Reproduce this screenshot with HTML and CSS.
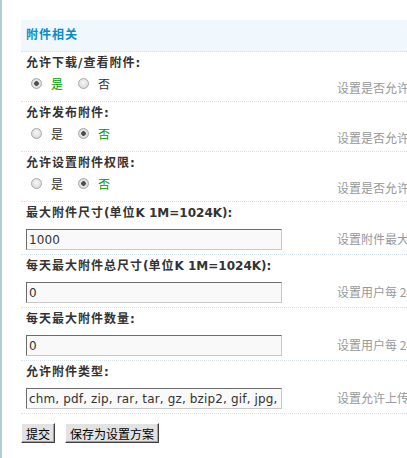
FILE: index.html
```html
<!DOCTYPE html>
<html lang="zh-CN">
  <head>
    <meta charset="UTF-8" />
    <meta name="viewport" content="width=device-width, initial-scale=1.0" />
    <title>附件相关</title>
    <link rel="stylesheet" href="styles.css">
  </head>

  <body>
    <div class="main">
      <h3 class="hd">附件相关</h3>

      <!-- 单选项 -->
      <div class="row">
        <div class="label">允许下载/查看附件:</div>
        <div class="ctrl">
          <div class="radios">
            <label class="checked"><input type="radio" name="allowgetattach" checked>是</label>
            <label><input type="radio" name="allowgetattach">否</label>
          </div>
          <div class="tips">设置是否允许下载和查看附件</div>
        </div>
      </div>

      <div class="row">
        <div class="label">允许发布附件:</div>
        <div class="ctrl">
          <div class="radios">
            <label><input type="radio" name="allowpostattach">是</label>
            <label class="checked"><input type="radio" name="allowpostattach" checked>否</label>
          </div>
          <div class="tips">设置是否允许发布附件</div>
        </div>
      </div>

      <div class="row">
        <div class="label">允许设置附件权限:</div>
        <div class="ctrl">
          <div class="radios">
            <label><input type="radio" name="allowsetattachperm">是</label>
            <label class="checked"><input type="radio" name="allowsetattachperm" checked>否</label>
          </div>
          <div class="tips">设置是否允许设置附件权限</div>
        </div>
      </div>

      <!-- 文本项 -->
      <div class="row">
        <div class="label">最大附件尺寸<span class="en">(</span>单位<span class="en">K 1M=1024K):</span></div>
        <div class="ctrl">
          <div class="field"><input type="text" class="txt" value="1000"></div>
          <div class="tips tips-txt">设置附件最大尺寸</div>
        </div>
      </div>

      <div class="row">
        <div class="label">每天最大附件总尺寸<span class="en">(</span>单位<span class="en">K 1M=1024K):</span></div>
        <div class="ctrl">
          <div class="field"><input type="text" class="txt" value="0"></div>
          <div class="tips tips-txt">设置用户每 24 小时可以上传的附件总量</div>
        </div>
      </div>

      <div class="row">
        <div class="label">每天最大附件数量:</div>
        <div class="ctrl">
          <div class="field"><input type="text" class="txt" value="0"></div>
          <div class="tips tips-txt">设置用户每 24 小时可以上传的附件数量</div>
        </div>
      </div>

      <div class="row">
        <div class="label">允许附件类型:</div>
        <div class="ctrl">
          <div class="field"><input type="text" class="txt" value="chm, pdf, zip, rar, tar, gz, bzip2, gif, jpg, jpeg, png"></div>
          <div class="tips tips-txt">设置允许上传的附件类型</div>
        </div>
      </div>

      <div class="btns">
        <button type="submit" class="btn">提交</button>
        <button type="button" class="btn">保存为设置方案</button>
      </div>
    </div>
  </body>
</html>
```

FILE: styles.css
```css
html,
body {
  margin: 0;
  padding: 0;
  overflow: hidden;
  background: #fff;
}

body {
  font: 12px "DejaVu Sans", "Noto Sans CJK SC", sans-serif;
  color: #333;
}

/* 外框 */
.main {
  width: 700px;
  height: 438px;
  padding: 20px 0 0 19px;
  border-left: 2px solid #b5ccd8;
}

/* 标题 */
.hd {
  margin: 0;
  height: 31px;
  line-height: 31px;
  padding-left: 5px;
  font-size: 12px;
  font-weight: bold;
  letter-spacing: 1px;
  color: #0a8cc8;
  background: #f0f7fd;
  border-bottom: 1px dotted #d3e2ec;
}

.row {
  border-bottom: 1px dotted #d3e2ec;
}

.label {
  padding: 2px 5px 0;
  line-height: 18px;
  font-weight: bold;
  letter-spacing: 1px;
  color: #333;
}

.label .en {
  letter-spacing: 0;
}

.ctrl {
  display: grid;
  grid-template-columns: 316px 1fr;
}

/* 单选 */
.radios {
  display: flex;
  align-items: center;
  height: 22px;
  padding: 0 0 7px 10px;
}

.radios label {
  display: flex;
  align-items: center;
  margin-right: 15px;
  font-family: "Noto Sans CJK SC", sans-serif;
  color: #333;
}

.radios label.checked {
  color: #090;
}

.radios input {
  appearance: none;
  box-sizing: border-box;
  width: 11px;
  height: 11px;
  margin: 0 9px 0 0;
  border: 1px solid #a8a8a8;
  border-radius: 50%;
  background: radial-gradient(circle at 50% 40%, #f7f7f7, #d2d2d2);
}

.radios input:checked {
  background: radial-gradient(circle, #4d4d4d 0 2px, #e6e6e6 2.6px, #cfcfcf);
}

/* 文本框 */
.field {
  padding: 7px 0 4px 5px;
}

.txt {
  display: block;
  box-sizing: border-box;
  width: 256px;
  height: 21px;
  margin: 0;
  padding: 0 2px;
  font: 12px "DejaVu Sans", sans-serif;
  letter-spacing: 0.15px;
  color: #333;
  background: #f9f9f9;
  border: 1px solid;
  border-color: #6c6c6c #c8c8c8 #c8c8c8 #6c6c6c;
  outline: none;
}

/* 说明 */
.tips {
  padding-top: 7px;
  line-height: 18px;
  white-space: nowrap;
  font-family: "Noto Sans CJK SC", sans-serif;
  color: #999;
}

.tips-txt {
  padding-top: 8px;
}

/* 按钮 */
.btns {
  display: flex;
  gap: 10px;
  padding-top: 9px;
}

.btn {
  height: 20px;
  padding: 0 4px;
  font: 12px "Noto Sans CJK SC", sans-serif;
  color: #000;
  background: #e2e2e2;
  border: 1px solid;
  border-color: #fff #404040 #404040 #fff;
  box-shadow: inset -1px -1px 0 #a0a0a0;
  cursor: pointer;
}
```
